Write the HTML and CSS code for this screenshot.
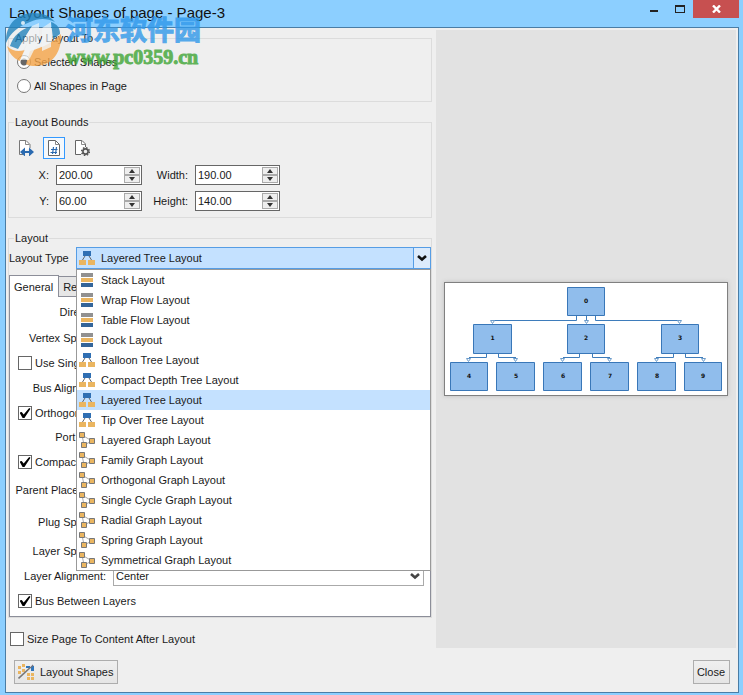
FILE: index.html
```html
<!DOCTYPE html>
<html lang="en">
<head>
<meta charset="utf-8">
<title>Layout Shapes of page - Page-3</title>
<link rel="stylesheet" href="styles.css">
</head>
<body>
<svg class="defs" aria-hidden="true">
  <symbol id="i-stack" viewBox="0 0 16 16">
    <path fill="#919191" d="M2 1h12v4H2z"/><path fill="#eab560" d="M2 6h12v4H2z"/><path fill="#34659a" d="M2 11h12v4H2z"/>
  </symbol>
  <symbol id="i-tree" viewBox="0 0 16 16">
    <path fill="none" stroke="#666" d="M6 6 3.500 10M10 6l2.500 4"/>
    <path fill="#2f6fb3" d="M4 1h8v5H4z"/><path fill="#eab560" d="M0 10h7v5H0zM9 10h7v5H9z"/>
  </symbol>
  <symbol id="i-graph" viewBox="0 0 16 16">
    <path fill="none" stroke="#aaa" d="M3 3l10 6-8 4z"/>
    <path fill="#eab560" stroke="#777" d="M.5.500h5v5h-5zM10.500 6.500h5v5h-5zM2.500 10.500h5v5h-5z"/>
  </symbol>
  <symbol id="i-chevron" viewBox="0 0 10 8">
    <path fill="none" stroke="currentColor" stroke-width="2.600" d="M1 2 5 5.500 9 2"/>
  </symbol>
  <symbol id="i-up" viewBox="0 0 6 4"><path fill="#333" d="M0 4 3 0l3 4z"/></symbol>
  <symbol id="i-down" viewBox="0 0 6 4"><path fill="#333" d="M0 0h6L3 4z"/></symbol>
</svg>

<header class="titlebar">
  <h1>Layout Shapes of page - Page-3</h1>
  <div class="window-buttons">
    <button class="win" aria-label="Minimize"><svg width="8" height="2"><path fill="#222" d="M0 0h8v2H0z"/></svg></button>
    <button class="win" aria-label="Maximize"><svg width="10" height="8"><path fill="#222" fill-rule="evenodd" d="M0 0h10v8H0zM1 2v5h8V2z"/></svg></button>
    <button class="win win-close" aria-label="Close window"><svg width="9" height="8"><path stroke="#fff" stroke-width="2.400" d="M1 .5l7 7M8 .5l-7 7"/></svg></button>
  </div>
</header>

<main class="dialog">
  <div class="columns">
    <form class="settings">
      <fieldset class="group apply">
        <legend>Apply Layout To</legend>
        <label class="radio-row"><input type="radio" name="apply" checked>Selected Shapes</label>
        <label class="radio-row"><input type="radio" name="apply">All Shapes in Page</label>
      </fieldset>

      <fieldset class="group bounds">
        <legend>Layout Bounds</legend>
        <div class="tools">
          <button type="button" class="tool" aria-label="Fit to page">
            <svg width="16" height="16"><path fill="#fff" stroke="#777" d="M1.500 14.500V.5H8l4 4V8M1.500 14.500H5"/><path fill="none" stroke="#888" d="M7.500.500v4h4"/><path fill="#2a6ab0" d="M2 12 7 7.500V11h4V7.500l5 4.500-5 4.500V13H7v3.500z"/></svg>
          </button>
          <button type="button" class="tool selected" aria-label="Use numeric bounds">
            <svg width="16" height="16"><path fill="#fff" stroke="#666" d="M2.500.500h7l4 4v11h-11z"/><path fill="none" stroke="#888" d="M9.500.500v4h4"/><path fill="none" stroke="#2a6ab0" stroke-width="1.200" d="M7.500 7 6.500 14M10.500 7l-1 7M5 9.500h6.500M4.500 12.500H11"/></svg>
          </button>
          <button type="button" class="tool" aria-label="Automatic bounds">
            <svg width="16" height="16"><path fill="#fff" stroke="#666" d="M7 14.500H1.500V.5H8l3.500 3.500v3"/><path fill="none" stroke="#888" d="M7.500.500v4h4"/><circle cx="11.500" cy="11.500" r="3.800" fill="none" stroke="#555" stroke-width="1.600" stroke-dasharray="1.500 1.480"/><circle cx="11.500" cy="11.500" r="2.600" fill="#efefef" stroke="#555" stroke-width="1.600"/></svg>
          </button>
        </div>
        <div class="numbers">
          <label for="bx">X:</label>
          <div class="spin"><input id="bx" value="200.00"><span><button type="button" aria-label="Increase X"><svg><use href="#i-up"/></svg></button><button type="button" aria-label="Decrease X"><svg><use href="#i-down"/></svg></button></span></div>
          <label for="bw">Width:</label>
          <div class="spin"><input id="bw" value="190.00"><span><button type="button" aria-label="Increase width"><svg><use href="#i-up"/></svg></button><button type="button" aria-label="Decrease width"><svg><use href="#i-down"/></svg></button></span></div>
          <label for="by">Y:</label>
          <div class="spin"><input id="by" value="60.00"><span><button type="button" aria-label="Increase Y"><svg><use href="#i-up"/></svg></button><button type="button" aria-label="Decrease Y"><svg><use href="#i-down"/></svg></button></span></div>
          <label for="bh">Height:</label>
          <div class="spin"><input id="bh" value="140.00"><span><button type="button" aria-label="Increase height"><svg><use href="#i-up"/></svg></button><button type="button" aria-label="Decrease height"><svg><use href="#i-down"/></svg></button></span></div>
        </div>
      </fieldset>

      <fieldset class="group layout">
        <legend>Layout</legend>
        <div class="type-row">
          <label for="type">Layout Type</label>
          <div class="combo">
            <select id="type"><option>Layered Tree Layout</option></select>
            <svg class="combo-icon"><use href="#i-tree"/></svg>
            <span class="combo-arrow"><svg><use href="#i-chevron"/></svg></span>
            <ul class="menu" role="listbox" aria-label="Layout Type">
              <li role="option"><svg><use href="#i-stack"/></svg>Stack Layout</li>
              <li role="option"><svg><use href="#i-stack"/></svg>Wrap Flow Layout</li>
              <li role="option"><svg><use href="#i-stack"/></svg>Table Flow Layout</li>
              <li role="option"><svg><use href="#i-stack"/></svg>Dock Layout</li>
              <li role="option"><svg><use href="#i-tree"/></svg>Balloon Tree Layout</li>
              <li role="option"><svg><use href="#i-tree"/></svg>Compact Depth Tree Layout</li>
              <li role="option" class="current" aria-selected="true"><svg><use href="#i-tree"/></svg>Layered Tree Layout</li>
              <li role="option"><svg><use href="#i-tree"/></svg>Tip Over Tree Layout</li>
              <li role="option"><svg><use href="#i-graph"/></svg>Layered Graph Layout</li>
              <li role="option"><svg><use href="#i-graph"/></svg>Family Graph Layout</li>
              <li role="option"><svg><use href="#i-graph"/></svg>Orthogonal Graph Layout</li>
              <li role="option"><svg><use href="#i-graph"/></svg>Single Cycle Graph Layout</li>
              <li role="option"><svg><use href="#i-graph"/></svg>Radial Graph Layout</li>
              <li role="option"><svg><use href="#i-graph"/></svg>Spring Graph Layout</li>
              <li role="option"><svg><use href="#i-graph"/></svg>Symmetrical Graph Layout</li>
            </ul>
          </div>
        </div>
        <div class="tabs" role="tablist">
          <button type="button" role="tab" class="tab active" aria-selected="true">General</button>
          <button type="button" role="tab" class="tab">Region</button>
        </div>
        <div class="panel" role="tabpanel">
          <label for="dir">Direction:</label><input id="dir">
          <label for="vsp">Vertex Spacing:</label><input id="vsp">
          <label class="check-row"><input type="checkbox">Use Single Bus</label>
          <label for="bus">Bus Alignment:</label><input id="bus">
          <label class="check-row"><input type="checkbox" checked>Orthogonal</label>
          <label for="port">Port Style:</label><input id="port">
          <label class="check-row"><input type="checkbox" checked>Compact</label>
          <label for="par">Parent Placement:</label><input id="par">
          <label for="plug">Plug Spacing:</label><input id="plug">
          <label for="lsp">Layer Spacing:</label><input id="lsp">
          <label for="align">Layer Alignment:</label>
          <div class="small-combo">
            <select id="align"><option>Center</option></select>
            <svg><use href="#i-chevron"/></svg>
          </div>
          <label class="check-row"><input type="checkbox" checked>Bus Between Layers</label>
        </div>
      </fieldset>
      <label class="check-row size-row"><input type="checkbox">Size Page To Content After Layout</label>
    </form>

    <section class="preview" aria-label="Preview">
      <svg class="sheet" viewBox="0 0 282 112">
        <g transform="translate(-445 -283)">
          <g fill="none" stroke="#3e7cbb">
            <path d="M576.500 316v4.500H492.500M586.500 316v5M595.500 316v4.500h84"/>
            <path d="M486.500 354v3.500H469M498.500 354v3.500H516M579.500 354v3.500H563M592.500 354v3.500H610M673.500 354v3.500H656M685.500 354v3.500H703"/>
            <g fill="#fff" stroke="#6b9bca">
              <path d="M490.500 320.500h4l-2 3zM584.500 320.500h4l-2 3zM677.500 320.500h4l-2 3z"/>
              <path d="M466.500 358.500h4l-2 3zM513.500 358.500h4l-2 3zM560.500 358.500h4l-2 3zM607.500 358.500h4l-2 3zM654.500 358.500h4l-2 3zM701.500 358.500h4l-2 3z"/>
            </g>
          </g>
          <g fill="#90bdec" stroke="#3977b8">
            <path d="M567.500 287.500h37v28h-37zM473.500 324.500h38v29h-38zM567.500 324.500h37v29h-37zM661.500 324.500h37v29h-37z"/>
            <path d="M450.500 362.500h37v28h-37zM496.500 362.500h38v28h-38zM543.500 362.500h38v28h-38zM590.500 362.500h38v28h-38zM637.500 362.500h38v28h-38zM684.500 362.500h37v28h-37z"/>
          </g>
          <g class="node-text">
            <text x="586" y="303">0</text><text x="492.500" y="340">1</text><text x="586" y="340">2</text><text x="680" y="340">3</text>
            <text x="469" y="378">4</text><text x="516" y="378">5</text><text x="563" y="378">6</text><text x="610" y="378">7</text><text x="657" y="378">8</text><text x="703" y="378">9</text>
          </g>
        </g>
      </svg>
    </section>
  </div>

  <footer class="actions">
    <button class="push">
      <svg width="18" height="18"><path fill="#eab560" d="M0 3h3v3H0zM4 1h3v3H4zM0 8h3v3H0zM4 6h3v3H4zM9 10h3v3H9zM13 10h3v3h-3zM9 14h3v3H9zM13 14h3v3h-3z"/><path fill="#2f75bc" d="M8 3h8v5h-3V5H8z"/><path stroke="#777" stroke-width="1.600" d="M.5 15.500 15 2"/><path stroke="#ccd" d="M12 4l3-3"/></svg>
      Layout Shapes
    </button>
    <button class="push">Close</button>
  </footer>
</main>

<div class="watermark">
  <svg class="mark" viewBox="0 0 56 54">
    <path fill="#2484bd" d="M0 30C-1 12 11 0 28 0c9 0 16 3 21 9-8-4-17-4-25 0C13 13 4 20 0 30z"/>
    <path fill="#2484bd" d="M4 33c3-10 11-17 22-20l-7 11-7 12zM45 9c6 2 9 6 9 12l-7 5z"/>
    <path fill="#f6a548" d="M1 33c5 5 11 6 18 4l-5 11C7 45 3 40 1 33zM24 38c14-4 24-9 31-17 1 18-9 32-25 32-4 0-7 0-10-2z"/>
    <path fill="#f2f6f8" fill-opacity=".8" d="M12 37 26 13l7-3v21h3V15l9-6v25l-9 4v-5h-6l-7 14H14l9-20-6 10z"/>
    <circle cx="17" cy="10" r="2" fill="#e5eff4"/>
  </svg>
  <div class="mark-text"><span class="mark-name" lang="zh">河东软件园</span><span class="mark-site">www.pc0359.cn</span></div>
</div>
</body>
</html>
```
FILE: styles.css
```css
* { box-sizing: border-box; }
body {
  margin: 0;
  min-height: 100vh;
  display: flex;
  flex-direction: column;
  padding: 0 4px 2px 5px;
  background: #8ccfff;
  color: #1a1a1a;
  font: 11px/16px "Liberation Sans", Arial, sans-serif;
}
button, input, select { font: inherit; color: inherit; margin: 0; }
button { padding: 0; }
.defs { display: none; }
svg { display: block; flex: none; }

.titlebar { display: flex; justify-content: space-between; height: 27px; }
.titlebar h1 { margin: 0; padding-left: 4px; font-size: 15px; line-height: 26px; font-weight: 400; color: #111; }
.window-buttons { display: flex; height: 18px; }
.win { width: 26px; border: 0; background: none; display: flex; align-items: center; justify-content: center; }
.win:first-child { padding-top: 4px; }
.win-close { width: 46px; background: #c75050; }

.dialog {
  flex: 1;
  display: flex;
  flex-direction: column;
  padding: 2px;
  border: 1px solid #4a7da5;
  background: #efefef;
}
.columns { flex: 1; display: grid; grid-template-columns: minmax(0, 1fr) 300px; gap: 4px; }
.group { margin: 0; min-width: 0; border: 1px solid #dcdcdc; }
.group legend { padding: 0 1px; }
.apply, .bounds { margin-bottom: 12px; padding: 4px 5px 3px; }
.bounds { padding: 7px 5px 6px; }

.radio-row { display: flex; align-items: center; gap: 3px; height: 24px; padding-left: 3px; }
input[type="radio"] {
  appearance: none;
  width: 14px;
  height: 14px;
  border: 1px solid #777;
  border-radius: 50%;
  background: #fff;
}
input[type="radio"]:checked { background: radial-gradient(#666 0 3px, #fff 4px); }

.tools { display: flex; gap: 6px; padding-left: 1px; margin-bottom: 6px; }
.tool { display: flex; align-items: center; justify-content: center; width: 22px; height: 22px; border: 1px solid transparent; background: none; }
.tool.selected { border-color: #3399ff; background: #f4f8fc; }
.numbers { display: grid; grid-template-columns: 34px 86px 39px 85px; gap: 6px 7px; padding-left: 1px; align-items: center; }
.numbers label { text-align: right; }
.spin { display: flex; height: 20px; border: 1px solid #666; background: #fff; padding: 1px; }
.spin input { flex: 1; min-width: 0; padding: 0 1px; border: 0; background: none; }
.spin span { display: grid; width: 16px; grid-template-rows: 1fr 1fr; }
.spin button { display: flex; align-items: center; justify-content: center; border: 1px solid #aaa; background: #eee; min-height: 0; }
.spin svg { width: 6px; height: 4px; }

.layout { padding: 1px 0 0; }
.layout legend { margin-left: 5px; }
.type-row { display: grid; grid-template-columns: 67px minmax(0, 1fr); align-items: center; }
.combo { position: relative; display: grid; grid-template-columns: 24px 1fr 18px; height: 22px; align-items: center; }
.combo select {
  grid-area: 1 / 1 / 2 / 4;
  appearance: none;
  height: 22px;
  padding: 0 24px;
  border: 1px solid #569de5;
  border-radius: 0;
  background: #c4e1ff;
}
.combo-icon { grid-area: 1 / 1; width: 16px; height: 16px; margin-left: 3px; pointer-events: none; z-index: 1; }
.combo-arrow { grid-area: 1 / 3; display: flex; align-items: center; justify-content: center; height: 22px; border: 1px solid #569de5; background: #dcebfc; color: #111; pointer-events: none; z-index: 1; }
.combo-arrow svg, .small-combo svg { width: 10px; height: 8px; }
.menu {
  position: absolute;
  z-index: 2;
  top: 100%;
  left: 0;
  right: 0;
  margin: 0;
  padding: 0;
  list-style: none;
  border: 1px solid #999;
  background: #fff;
}
.menu li { display: flex; align-items: center; gap: 6px; height: 20px; padding-left: 2px; }
.menu svg { width: 16px; height: 16px; }
.menu .current { background: #c4e1ff; }

.tabs { display: flex; align-items: flex-end; height: 27px; }
.tab { height: 20px; padding: 0 4px; border: 1px solid #8c8e99; border-left: 0; border-bottom: 0; background: #e6e6e6; }
.tab.active { position: relative; z-index: 1; height: 22px; margin-bottom: -1px; padding-right: 5px; border-left: 1px solid #8c8e99; background: #fff; }
.panel {
  display: grid;
  grid-template-columns: 96px minmax(0, 1fr);
  grid-template-rows: 26px 26px 24px 26px 24px 24px 26px 30px 34px 24px 26px 24px;
  column-gap: 7px;
  align-items: center;
  padding: 2px 6px 3px 0;
  border: 1px solid #8c8e99;
  background: #fff;
}
.panel > label { text-align: right; }
.panel > input { height: 20px; border: 1px solid #aaa; background: #fff; }
.check-row, .panel > .check-row { display: flex; align-items: center; gap: 3px; padding-left: 8px; text-align: left; }
.panel > .check-row { grid-column: 1 / 3; }
input[type="checkbox"] { appearance: none; display: grid; place-items: center; width: 14px; height: 14px; border: 1px solid #666; background: #fff; }
input[type="checkbox"]:checked::before {
  content: "";
  width: 11px;
  height: 10px;
  background: #000;
  clip-path: polygon(0 45%, 20% 40%, 38% 65%, 88% 0, 100% 8%, 45% 100%, 28% 100%);
}
.size-row.check-row { height: 18px; margin-top: 12px; padding-left: 2px; }
.small-combo { display: grid; grid-template-columns: 1fr 18px; align-items: center; }
.small-combo select { grid-area: 1 / 1 / 2 / 3; appearance: none; height: 20px; padding: 0 2px; border: 1px solid #aaa; border-radius: 0; background: #fff; }
.small-combo svg { grid-area: 1 / 2; justify-self: center; color: #444; pointer-events: none; }

.preview { display: flex; align-items: center; padding: 0 8px; background: #e2e2e2; }
.sheet { flex: 1; min-width: 0; border: 1px solid #808080; background: #fff; box-shadow: 0 0 4px #bbb; }
.node-text { font: bold 6px "DejaVu Sans", sans-serif; text-anchor: middle; fill: #111; }

.actions { display: flex; justify-content: space-between; align-items: center; padding: 12px 6px 6px; }
.push { display: flex; align-items: center; gap: 4px; height: 24px; padding: 0 4px 0 3px; border: 1px solid #adadad; background: linear-gradient(#efefef, #e5e5e5); }

.watermark { position: absolute; top: 13px; left: 6px; display: flex; gap: 4px; pointer-events: none; opacity: .8; }
.mark { width: 56px; height: 54px; }
.mark-text { display: flex; flex-direction: column; }
.mark-name { color: #2f98ea; font: bold 27px/32px "Noto Sans CJK SC", sans-serif; -webkit-text-stroke: 1px #2f98ea; }
.mark-site { color: #3ea535; font: bold 20px/24px "Liberation Serif", serif; -webkit-text-stroke: 1px #3ea535; }
```
